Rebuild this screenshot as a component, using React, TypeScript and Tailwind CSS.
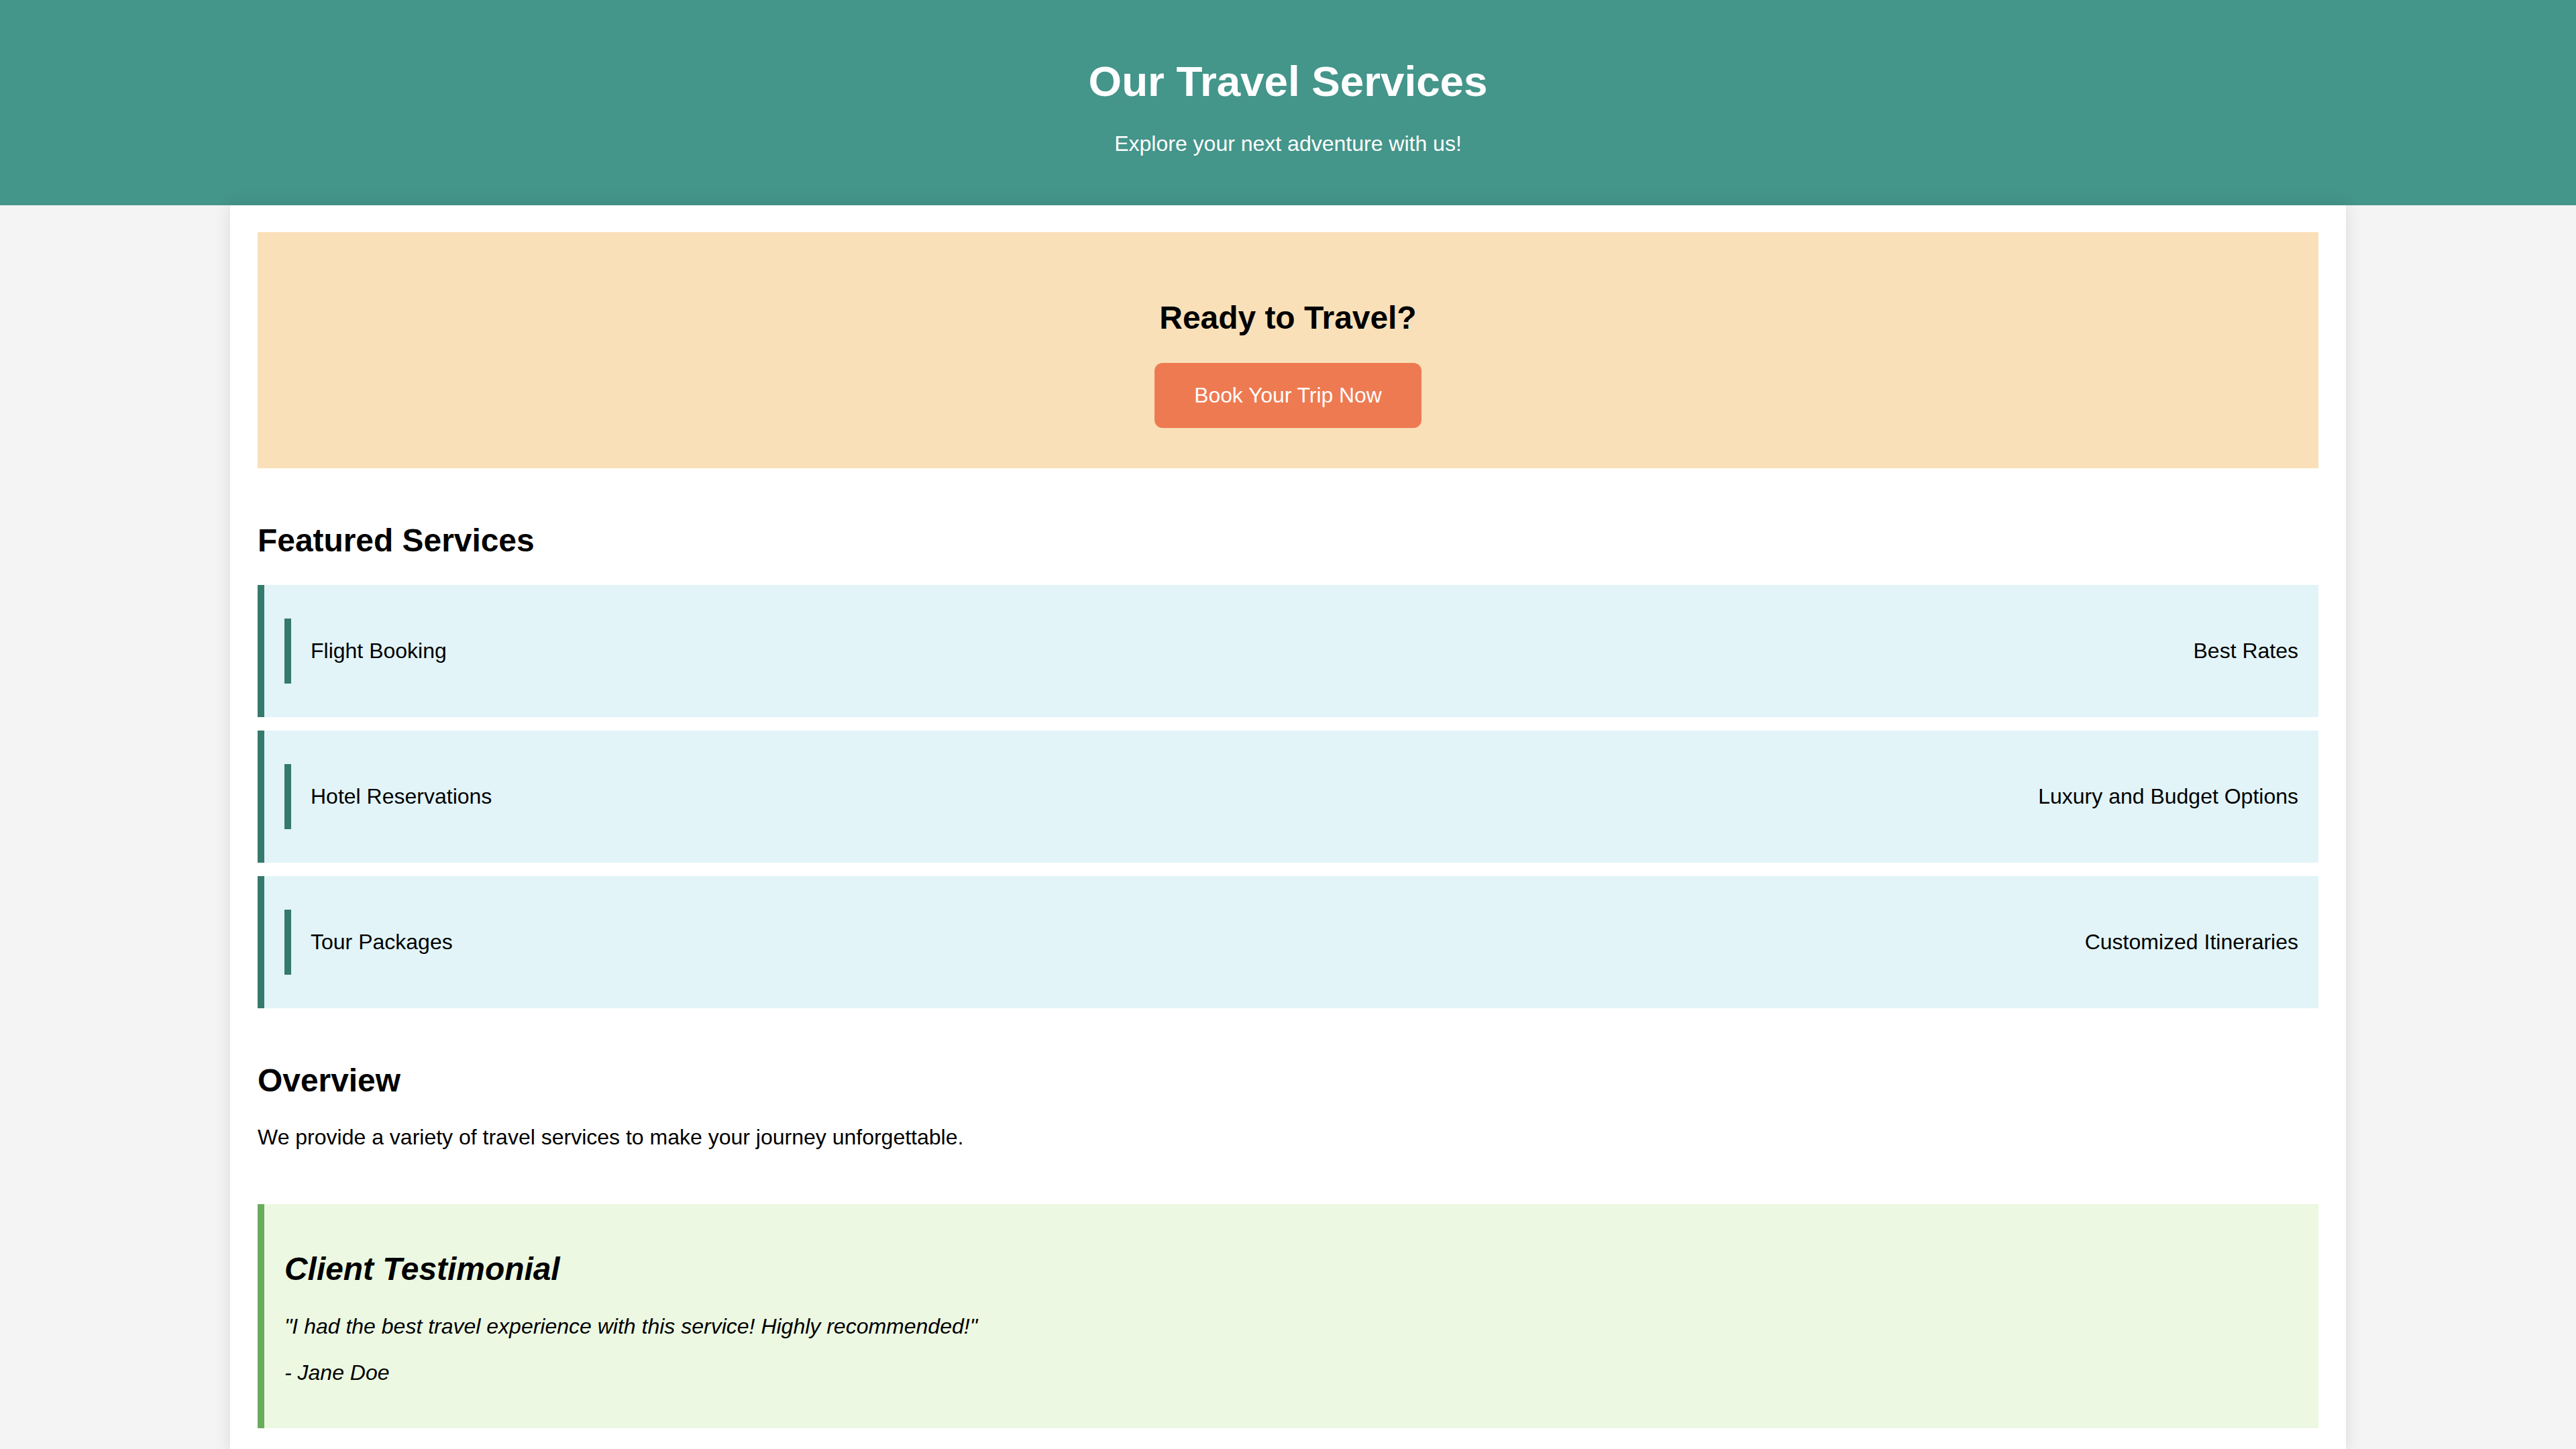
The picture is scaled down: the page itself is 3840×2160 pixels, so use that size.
import React from "react";

const services = [
  { name: "Flight Booking", note: "Best Rates" },
  { name: "Hotel Reservations", note: "Luxury and Budget Options" },
  { name: "Tour Packages", note: "Customized Itineraries" },
];

export default function App() {
  return (
    <div className="min-h-screen bg-[#f4f4f4] font-['Liberation_Sans',Arial,sans-serif] text-black">
      <header className="flex h-[306px] flex-col items-center bg-[#44958a] text-center text-white">
        <h1 className="mt-[84px] text-[63.7px] font-bold leading-[73px]">Our Travel Services</h1>
        <p className="mt-[39px] text-[32px] leading-[37px]">Explore your next adventure with us!</p>
      </header>

      <main className="mx-auto w-[3154px] bg-white px-[41px] pb-[40px] pt-[40px] shadow-[0_0_25px_rgba(0,0,0,0.1)]">
        <section className="flex flex-col items-center bg-[#f9e0b8] pb-[60px] pt-[100px]">
          <h2 className="text-[47.9px] font-bold leading-[55px]">Ready to Travel?</h2>
          <button className="mt-[40px] flex h-[97px] items-center rounded-[12px] bg-[#ee7a52] px-[59px] text-[31.84px] leading-[37px] text-white">
            Book Your Trip Now
          </button>
        </section>

        <h2 className="mt-[80px] text-[47.9px] font-bold leading-[55px]">Featured Services</h2>
        <div className="mt-[39px] flex flex-col gap-[20px]">
          {services.map((s) => (
            <div
              key={s.name}
              className="flex items-center justify-between border-l-[10px] border-[#357a6c] bg-[#e2f4f8] py-[50px] pl-[30px] pr-[30px]"
            >
              <div className="border-l-[10px] border-[#357a6c] py-[30px] pl-[29px] text-[32px] leading-[37px]">
                {s.name}
              </div>
              <div className="text-[32px] leading-[37px]">{s.note}</div>
            </div>
          ))}
        </div>

        <h2 className="mt-[80px] text-[47.9px] font-bold leading-[55px]">Overview</h2>
        <p className="mt-[39px] text-[32px] leading-[37px]">
          We provide a variety of travel services to make your journey unforgettable.
        </p>

        <section className="mt-[81px] border-l-[10px] border-[#68ad5e] bg-[#ecf8e2] pb-[64px] pl-[30px] pr-[30px] pt-[69px] italic">
          <h3 className="text-[47.9px] font-bold leading-[55px]">Client Testimonial</h3>
          <p className="mt-[40px] text-[32px] leading-[37px]">
            "I had the best travel experience with this service! Highly recommended!"
          </p>
          <p className="mt-[32px] text-[32px] leading-[37px]">- Jane Doe</p>
        </section>
      </main>
    </div>
  );
}
